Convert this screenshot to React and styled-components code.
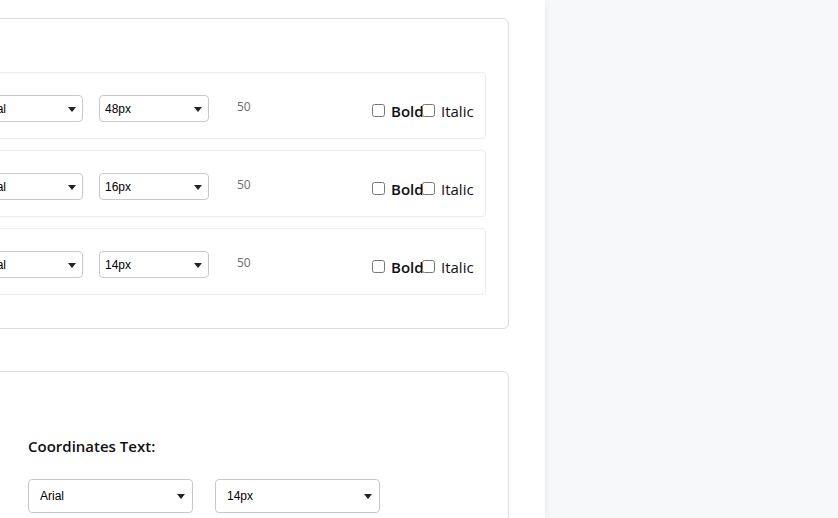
import React from 'react';
import styled, { createGlobalStyle } from 'styled-components';

const GlobalStyle = createGlobalStyle`
    html, body {
        margin: 0;
        padding: 0;
        background: #f7f8fa;
    }
    body {
        font-family: "Open Sans", "Liberation Sans", sans-serif;
        color: #111;
    }
`;

const Layout = styled.div`
    display: flex;
    height: 100vh;
    overflow: hidden;
`;

const Panel = styled.main`
    position: relative;
    z-index: 1;
    width: 545px;
    flex-shrink: 0;
    overflow: hidden;
    background: #fff;
    box-shadow: 2px 0 6px rgba(0, 0, 0, 0.05);
`;

/* panel is scrolled sideways, its left edge sits outside the view */
const Scroller = styled.div`
    margin-left: -88px;
    padding: 18px 36px 0 24px;
    display: flex;
    flex-direction: column;
    gap: 42px;
`;

const Aside = styled.aside`
    flex: 1;
    background: #f7f8fa;
`;

const Card = styled.section`
    border: 1px solid #dedede;
    border-radius: 6px;
    padding: ${p => p.$top}px 22px 33px;
`;

const Rows = styled.div`
    display: flex;
    flex-direction: column;
    gap: 11px;
`;

const Row = styled.div`
    display: flex;
    align-items: center;
    gap: 16px;
    padding: 22px 13px 16px 16px;
    border: 1px solid #ececec;
    border-radius: 4px;
`;

const SelectWrap = styled.div`
    position: relative;
    width: ${p => p.$w}px;
    flex-shrink: 0;

    &::after {
        content: '';
        position: absolute;
        right: ${p => p.$arrow}px;
        top: 50%;
        margin-top: -2px;
        border-left: 4px solid transparent;
        border-right: 4px solid transparent;
        border-top: 5px solid #222;
        pointer-events: none;
    }
`;

const Select = styled.select`
    appearance: none;
    -webkit-appearance: none;
    display: block;
    width: 100%;
    height: ${p => p.$h}px;
    padding: 0 0 0 ${p => p.$pad}px;
    border: 1px solid #c9c9c9;
    border-radius: 4px;
    background: #fff;
    font-family: "Liberation Sans", Arial, sans-serif;
    font-size: 12px;
    color: #000;
    outline: none;
`;

const Weight = styled.span`
    margin-left: 12px;
    margin-bottom: 4px;
    font-size: 12px;
    color: #6c6c6c;
`;

const Toggles = styled.div`
    display: flex;
    margin-left: auto;
    margin-top: 4px;
`;

const Toggle = styled.label`
    display: flex;
    align-items: center;
    width: 50px;
    white-space: nowrap;
    font-size: 15px;
    font-weight: ${p => (p.$bold ? 600 : 400)};

    input {
        width: 13px;
        height: 13px;
        margin: 0 6px 0 0;
        flex-shrink: 0;
    }
`;

const Field = styled.div`
    display: flex;
    flex-direction: column;
    padding-left: 69px;
`;

const FieldLabel = styled.div`
    font-size: 15px;
    line-height: 20px;
    font-weight: 600;
    margin-bottom: 23px;
`;

const SelectPair = styled.div`
    display: flex;
    gap: 22px;
`;

const fonts = ['Arial', 'Verdana', 'Georgia', 'Tahoma'];
const sizes = ['12px', '14px', '16px', '18px', '24px', '32px', '48px'];

const rows = [
    { id: 'title', size: '48px', weight: 50 },
    { id: 'axis', size: '16px', weight: 50 },
    { id: 'legend', size: '14px', weight: 50 },
];

function Dropdown({ options, value, w, h, pad, arrow }) {
    return (
        <SelectWrap $w={w} $arrow={arrow}>
            <Select $h={h} $pad={pad} defaultValue={value}>
                {options.map(o => <option key={o} value={o}>{o}</option>)}
            </Select>
        </SelectWrap>
    );
}

function FontRow({ row }) {
    return (
        <Row>
            <Dropdown options={fonts} value="Arial" w={107} h={27} pad={5} arrow={7} />
            <Dropdown options={sizes} value={row.size} w={110} h={27} pad={5} arrow={7} />
            <Weight>{row.weight}</Weight>
            <Toggles>
                <Toggle $bold><input type="checkbox" />Bold</Toggle>
                <Toggle><input type="checkbox" />Italic</Toggle>
            </Toggles>
        </Row>
    );
}

export default function App() {
    return (
        <>
            <GlobalStyle />
            <Layout>
                <Panel>
                    <Scroller>
                        <Card $top={53}>
                            <Rows>
                                {rows.map(r => <FontRow key={r.id} row={r} />)}
                            </Rows>
                        </Card>
                        <Card $top={64}>
                            <Field>
                                <FieldLabel>Coordinates Text:</FieldLabel>
                                <SelectPair>
                                    <Dropdown options={fonts} value="Arial" w={165} h={34} pad={11} arrow={8} />
                                    <Dropdown options={sizes} value="14px" w={165} h={34} pad={11} arrow={8} />
                                </SelectPair>
                            </Field>
                        </Card>
                    </Scroller>
                </Panel>
                <Aside />
            </Layout>
        </>
    );
}
